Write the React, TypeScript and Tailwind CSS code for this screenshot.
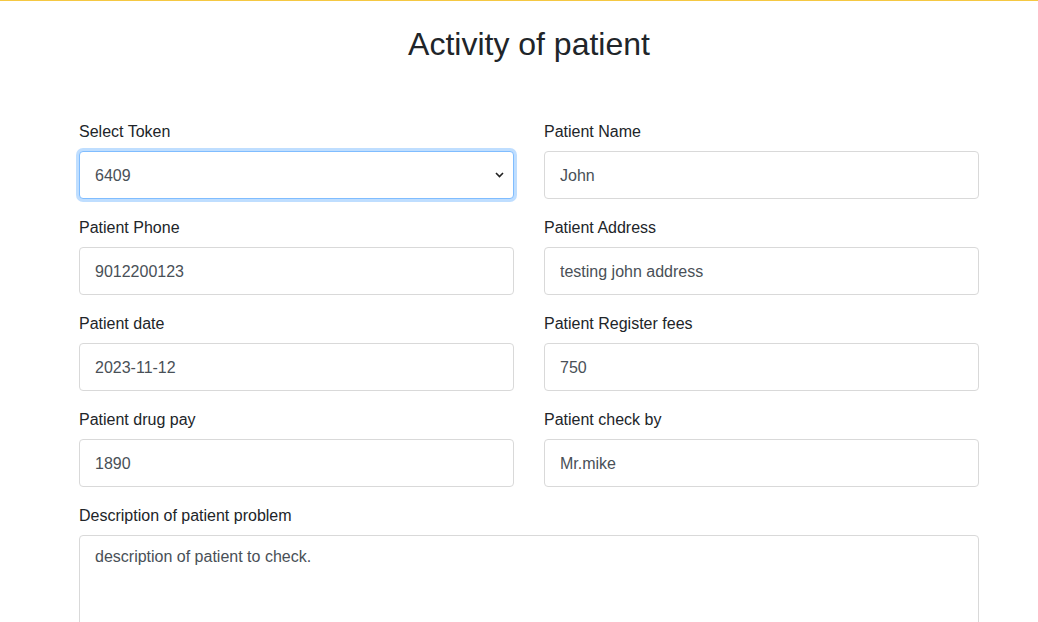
import { useState } from "react";

type Field = { label: string; value: string };

const rows: [Field, Field][] = [
    [{ label: "Select Token", value: "6409" }, { label: "Patient Name", value: "John" }],
    [{ label: "Patient Phone", value: "9012200123" }, { label: "Patient Address", value: "testing john address" }],
    [{ label: "Patient date", value: "2023-11-12" }, { label: "Patient Register fees", value: "750" }],
    [{ label: "Patient drug pay", value: "1890" }, { label: "Patient check by", value: "Mr.mike" }],
];

const inputCls =
    "block w-full h-[48px] px-[15px] pt-[2px] rounded-[4px] border border-[#d9d9d9] bg-white text-[16px] text-[#495057] outline-none";

const TokenSelect = ({ value }: { value: string }) => {
    const [token, setToken] = useState(value);
    return (
        <div className="relative">
            <select
                value={token}
                onChange={(e) => setToken(e.target.value)}
                className="block w-full h-[48px] px-[15px] pt-[2px] rounded-[4px] border border-[#80bdff] bg-white text-[16px] text-[#495057] outline-none appearance-none shadow-[0_0_0_3px_rgba(0,123,255,0.25)]"
            >
                <option value="6409">6409</option>
                <option value="6410">6410</option>
            </select>
            <svg
                className="absolute right-[10px] top-1/2 -translate-y-1/2 pointer-events-none"
                width="9"
                height="6"
                viewBox="0 0 9 6"
            >
                <path d="M1 1l3.5 3.5L8 1" fill="none" stroke="#222" strokeWidth="1.6" />
            </svg>
        </div>
    );
};

const App = () => {
    return (
        <div className="min-h-[622px] bg-white border-t border-[#f5c842] font-['Liberation_Sans',Arial,sans-serif] text-[#212529]">
            <div className="w-[900px] ml-[79px]">
                <h1 className="text-center text-[32px] leading-[1.2] mt-[24px] mb-[57px]">Activity of patient</h1>
                <div className="grid grid-cols-2 gap-x-[30px] gap-y-[17px]">
                    {rows.map(([a, b], i) => (
                        <>
                            <div key={`a${i}`}>
                                <label className="block text-[16px] leading-6 mb-[7px]">{a.label}</label>
                                {i === 0 ? (
                                    <TokenSelect value={a.value} />
                                ) : (
                                    <input className={inputCls} defaultValue={a.value} />
                                )}
                            </div>
                            <div key={`b${i}`}>
                                <label className="block text-[16px] leading-6 mb-[7px]">{b.label}</label>
                                <input className={inputCls} defaultValue={b.value} />
                            </div>
                        </>
                    ))}
                    <div className="col-span-2">
                        <label className="block text-[16px] leading-6 mb-[7px]">Description of patient problem</label>
                        <textarea
                            className="block w-full h-[130px] px-[15px] pt-[9px] pb-2 rounded-[4px] border border-[#d9d9d9] bg-white text-[16px] leading-6 text-[#495057] outline-none resize-none"
                            defaultValue="description of patient to check."
                        />
                    </div>
                </div>
            </div>
        </div>
    );
};

export default App;
